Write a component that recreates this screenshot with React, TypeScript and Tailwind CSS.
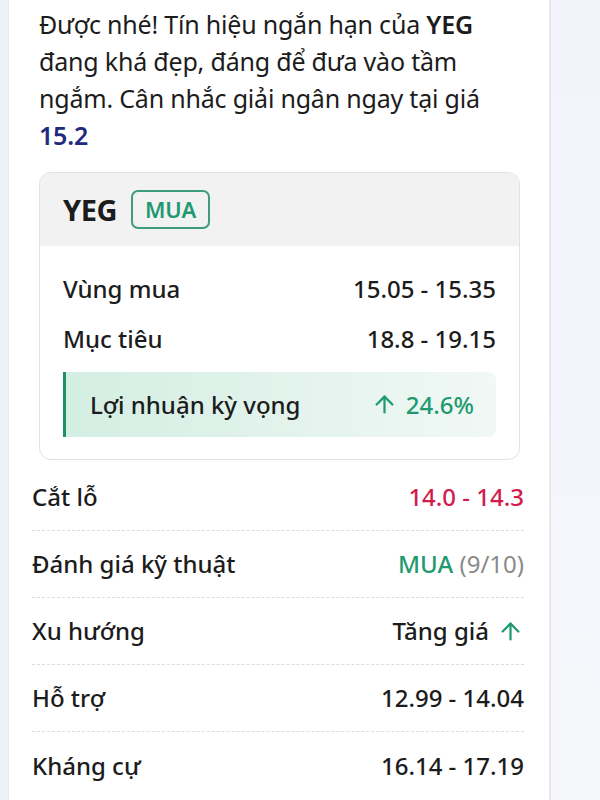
import React from 'react';
import { ArrowUp } from 'lucide-react';

interface Row {
  label: string;
  value: React.ReactNode;
}

const rows: Row[] = [
  { label: 'Cắt lỗ', value: <span className="text-[#d21c4c]">14.0 - 14.3</span> },
  {
    label: 'Đánh giá kỹ thuật',
    value: (
      <span>
        <span className="text-[#1f9a70]">MUA</span>{' '}
        <span className="font-normal text-[#8a8a8a]">(9/10)</span>
      </span>
    )
  },
  {
    label: 'Xu hướng',
    value: (
      <span className="flex items-center gap-[8px]">
        Tăng giá
        <ArrowUp className="w-[27px] h-[27px] text-[#1f9a70]" strokeWidth={2} />
      </span>
    )
  },
  { label: 'Hỗ trợ', value: '12.99 - 14.04' },
  { label: 'Kháng cự', value: '16.14 - 17.19' }
];

const App: React.FC = () => {
  return (
    <div
      className="w-[600px] h-[800px] flex overflow-hidden bg-gradient-to-b from-[#f3f4fa] to-[#f6f7fb] text-[#1c1c1c]"
      style={{ fontFamily: '"Noto Sans", "Open Sans", sans-serif' }}
    >
      {/* Left gutter */}
      <div className="w-[8px] flex-shrink-0 bg-[#eef0f8]"></div>

      {/* Message panel */}
      <div className="w-[543px] flex-shrink-0 bg-white border-l border-r-2 border-l-[#e6e8f2] border-r-[#e4e6f1] px-[23px]">
        <p className="pt-[6px] pl-[7px] text-[25px] leading-[37px] tracking-[-0.2px] whitespace-nowrap">
          Được nhé! Tín hiệu ngắn hạn của <span className="font-semibold">YEG</span>
          <br />
          đang khá đẹp, đáng để đưa vào tầm
          <br />
          ngắm. Cân nhắc giải ngân ngay tại giá
          <br />
          <span className="font-semibold text-[#1f2b7c]">15.2</span>
        </p>

        {/* Signal card */}
        <div className="mt-[18px] ml-[7px] w-[481px] rounded-[12px] border border-[#e2e2e2] overflow-hidden">
          <div className="h-[73px] bg-[#f2f2f2] px-[23px] flex items-center gap-[14px]">
            <span className="text-[29px] font-bold tracking-[-0.5px]">YEG</span>
            <span className="h-[39px] px-[12px] flex items-center rounded-[7px] border-2 border-[#3f9c7c] text-[#1f9a70] text-[22px] font-semibold">
              MUA
            </span>
          </div>

          <div className="px-[23px] pt-[18px] pb-[22px]">
            <div className="h-[50px] flex items-center justify-between text-[24px] font-medium">
              <span>Vùng mua</span>
              <span>15.05 - 15.35</span>
            </div>
            <div className="h-[50px] flex items-center justify-between text-[24px] font-medium">
              <span>Mục tiêu</span>
              <span>18.8 - 19.15</span>
            </div>
            <div className="mt-[8px] h-[65px] rounded-r-[8px] border-l-[3px] border-[#1f8f6a] bg-gradient-to-r from-[#d3eee3] to-[#f1f8f5] pl-[24px] pr-[22px] flex items-center justify-between text-[24px] font-medium">
              <span>Lợi nhuận kỳ vọng</span>
              <span className="flex items-center gap-[8px] text-[#1f9a70]">
                <ArrowUp className="w-[27px] h-[27px]" strokeWidth={2} />
                24.6%
              </span>
            </div>
          </div>
        </div>

        {/* Detail rows */}
        <div className="mt-[4px] pr-[2px]">
          {rows.map((row, index) => (
            <div
              key={index}
              className={`h-[67px] flex items-center justify-between text-[24px] font-medium ${
                index < rows.length - 1 ? 'border-b border-dashed border-[#dcdcdc]' : ''
              }`}
            >
              <span>{row.label}</span>
              {row.value}
            </div>
          ))}
        </div>
      </div>

      {/* Right backdrop */}
      <div className="flex-1"></div>
    </div>
  );
};

export default App;
